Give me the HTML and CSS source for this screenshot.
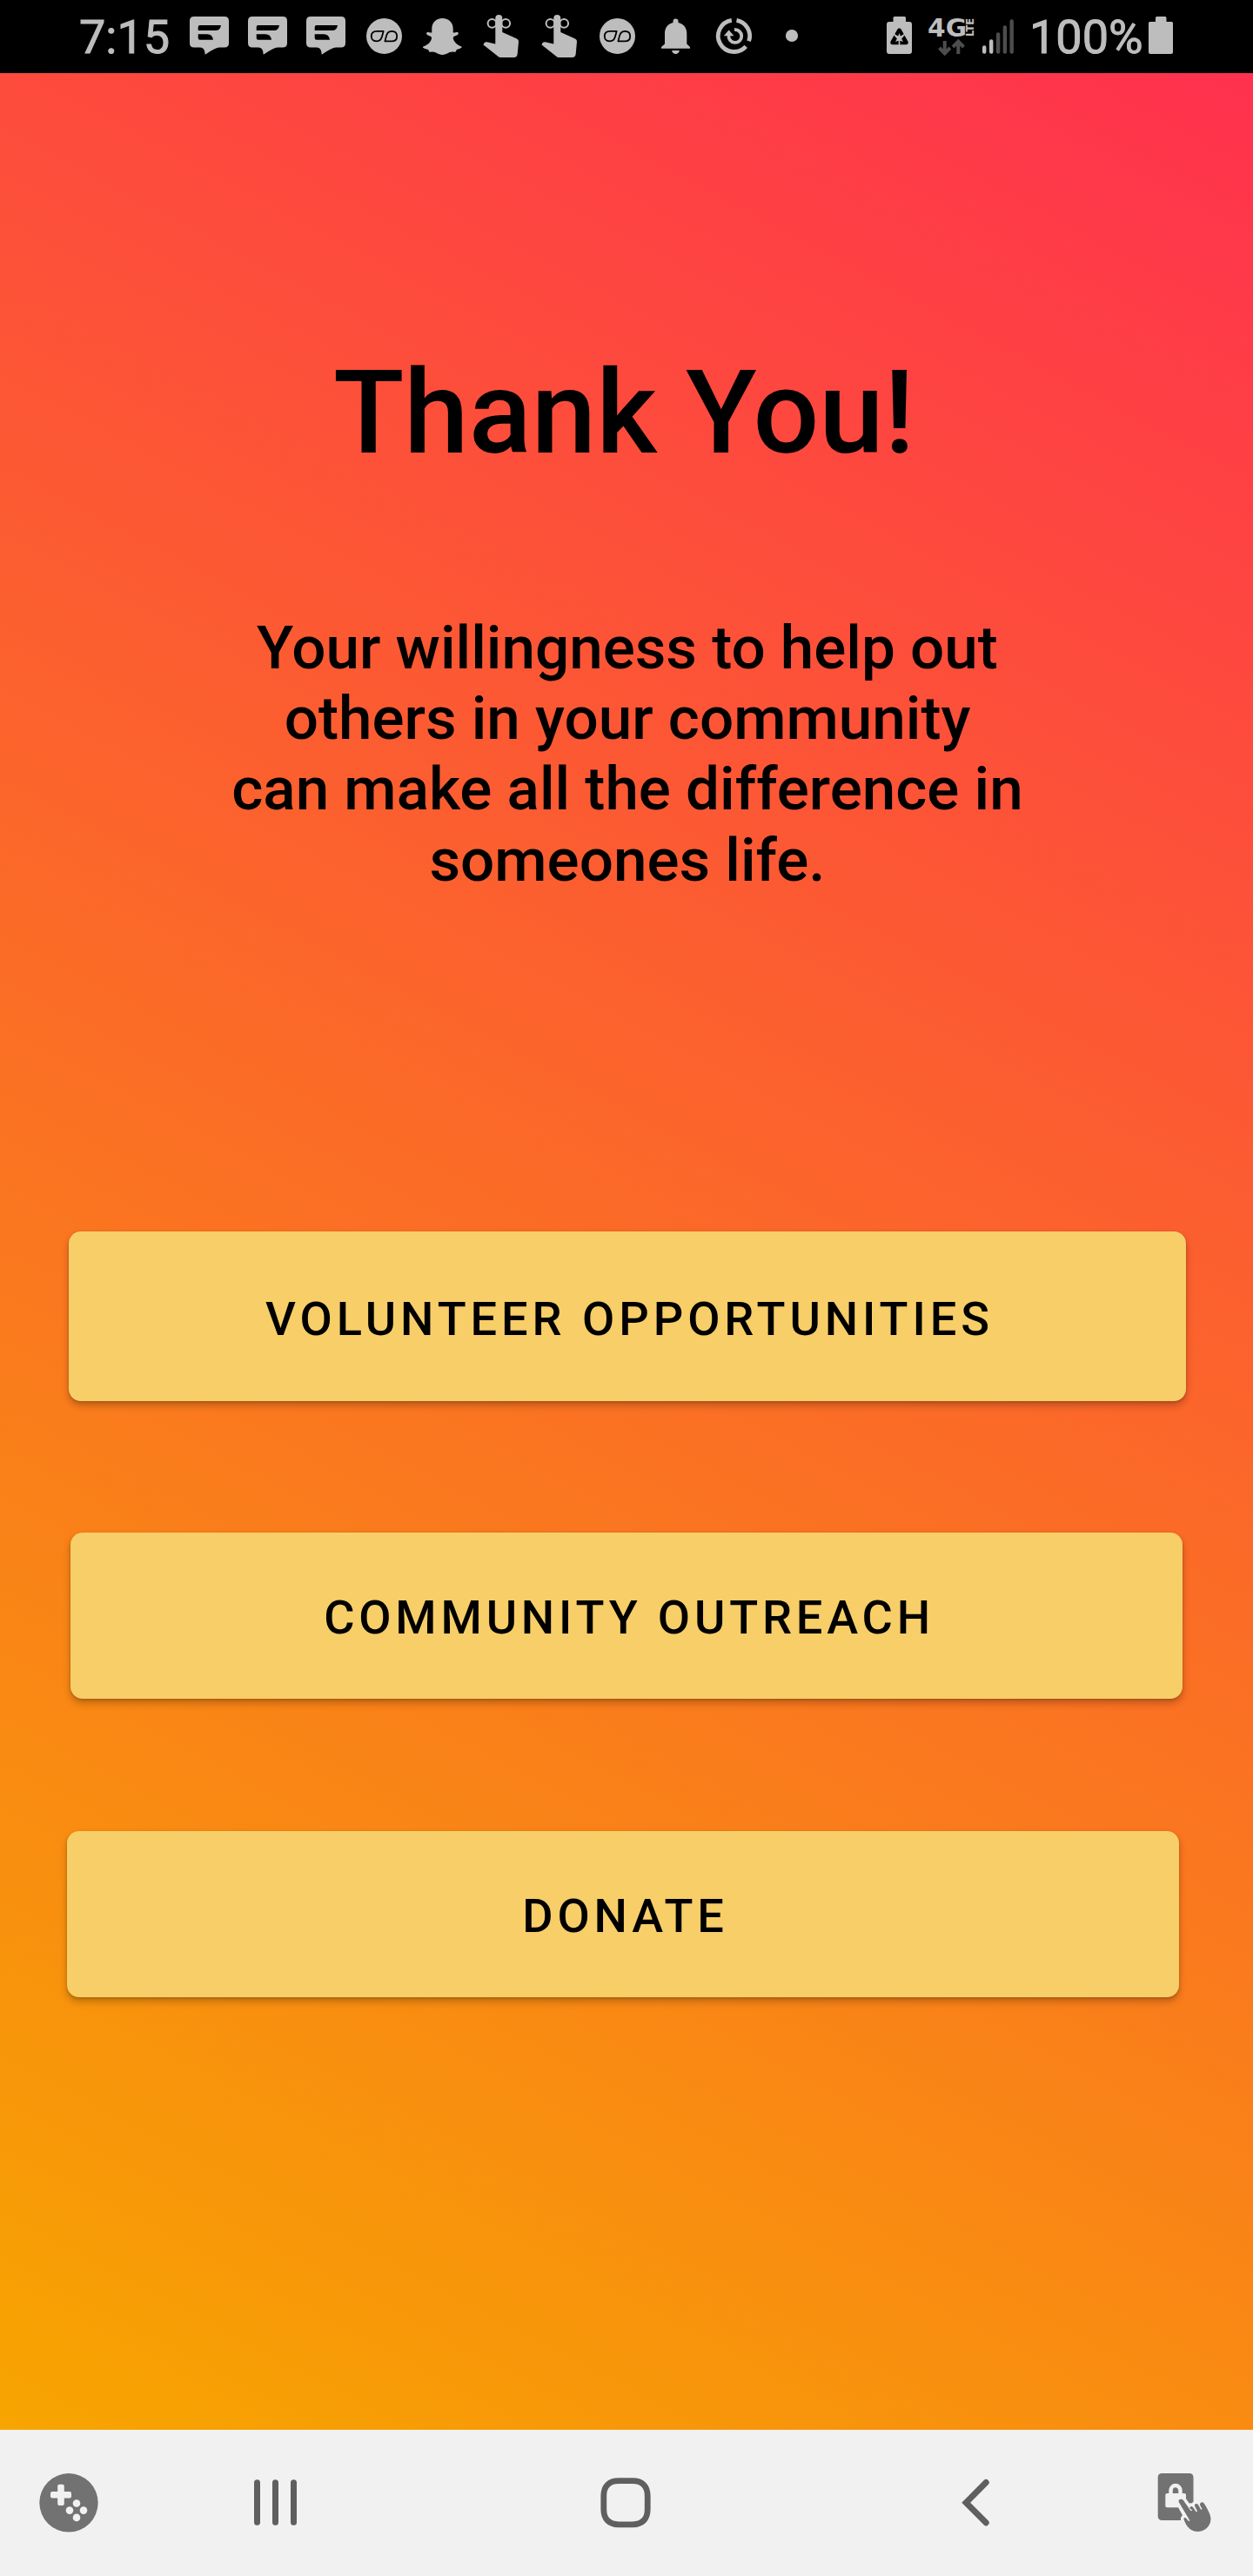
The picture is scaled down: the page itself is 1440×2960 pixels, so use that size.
FILE: index.html
```html
<!DOCTYPE html>
<html lang="en">
<head>
<meta charset="utf-8">
<title>Thank You!</title>
<link rel="stylesheet" href="styles.css">
</head>
<body>
<svg class="defs" aria-hidden="true">
  <symbol id="message" viewBox="207 0 67 84">
    <path fill="currentColor" d="M223 19H258Q263 19 263 24V49.500Q263 54.500 258 54.500H252Q248 54.500 235.700 62.700Q235.500 54.500 230 54.500H223Q218 54.500 218 49.500V24Q218 19 223 19Z"/>
    <path fill="#000" d="M229.700 29H254Q253 35 248 35H227.700V31Q227.700 29 229.700 29ZM227.700 39.300H238Q244 39.300 245 45.700H229.700Q227.700 45.700 227.700 43.700Z"/>
  </symbol>
  <symbol id="mask" viewBox="408 0 67 84">
    <circle cx="441.500" cy="41.400" r="20.500" fill="currentColor"/>
    <path fill="none" stroke="#000" stroke-width="1.800" stroke-linejoin="round" d="M440.700 35.800H433Q426.800 35.800 426.800 41.500T432.500 47.400C439 47.400 438.800 42 440.700 35.800ZM442.400 47.400H450Q456.200 47.400 456.200 41.700T450.500 35.800C444 35.800 444.200 41 442.400 47.400Z"/>
  </symbol>
  <symbol id="reminder" viewBox="542 0 67 84">
    <circle cx="565.500" cy="26.800" r="4.900" fill="none" stroke="currentColor" stroke-width="2"/>
    <circle cx="581.200" cy="26.800" r="4.900" fill="none" stroke="currentColor" stroke-width="2"/>
    <path fill="currentColor" d="M569.300 21A4 4 0 0 1 577.300 21V37L594 44.500Q596.300 45.500 596 48L594.700 62Q594.300 66 590.500 66H575.500Q573.500 66 572 64.500L555.500 51.500Q556.500 48 559.500 48.300L569.300 50.500Z"/>
  </symbol>
</svg>

<header class="status">
  <span class="clock">7:15</span>
  <svg class="tray"><use href="#message"/></svg>
  <svg class="tray"><use href="#message"/></svg>
  <svg class="tray"><use href="#message"/></svg>
  <svg class="tray"><use href="#mask"/></svg>
  <svg class="tray" viewBox="475 0 67 84"><path fill="currentColor" d="M508.400 21C516 21 520.700 26 520.700 33V37.500C523 38 524.500 36.500 526 37C527.500 38 527 39.500 525 40.500C522.500 41.700 520.500 42 520.800 44C521.500 48 525.500 52 530 53.300Q531.500 54.300 529.500 55.300C527.500 56.500 525.500 56.500 524.500 57.500C524 59.500 523.500 60 521.500 59.700C515.500 59 514.500 63 508.400 63S501.500 59 495.300 59.700C493.300 60 493 59.500 492.500 57.500C491.500 56.500 489 56.500 487 55.300Q485 54.300 486.700 53.300C491.500 52 495.500 48 496 44C496.300 42 494.300 41.700 491.800 40.500C489.800 39.500 489.500 38 491 37C492.500 36.500 494 38 496.300 37.500V33C496.300 26 501 21 508.400 21Z"/></svg>
  <svg class="tray"><use href="#reminder"/></svg>
  <svg class="tray"><use href="#reminder"/></svg>
  <svg class="tray"><use href="#mask"/></svg>
  <svg class="tray" viewBox="743 0 67 84"><path fill="currentColor" d="M773.500 24.500A3 3 0 0 1 779.500 24.500V26C786 27.500 789.300 32.500 789.300 38.500V50.500L793 54V55.700H760V54L764 50.500V38.500C764 32.500 767 27.500 773.500 26ZM772.200 58H780.800A4.300 4 0 0 1 772.200 58Z"/></svg>
  <svg class="tray" viewBox="810 0 67 84">
    <path fill="none" stroke="currentColor" stroke-width="4.800" d="M846.500 23.400A18.200 18.200 0 0 1 860.600 47.300M857.200 53.300A18.200 18.200 0 1 1 840.800 23.300"/>
    <path fill="none" stroke="currentColor" stroke-width="3.800" d="M844 34.200A7.400 7.400 0 1 1 837.500 40.500"/>
    <path fill="currentColor" d="M837.600 34.500L843.500 41.300H831.800Z"/>
  </svg>
  <svg class="tray" viewBox="877 0 67 84"><circle cx="910" cy="41" r="7.100" fill="currentColor"/></svg>

  <div class="system">
    <svg width="52" height="84" viewBox="1010 0 52 84">
      <path fill="currentColor" d="M1028 19H1039.500Q1041 19 1041 20.500V25H1045Q1048 25 1048 28V59Q1048 62 1045 62H1022Q1019 62 1019 59V28Q1019 25 1022 25H1026.500V20.500Q1026.500 19 1028 19Z"/>
      <path fill="none" stroke="#000" stroke-width="5" stroke-linejoin="round" d="M1033.500 35L1041.200 48.700H1025.800Z"/>
      <path stroke="currentColor" stroke-width="1.700" d="M1033.500 43.500V53M1033.500 43.500L1026 38.800M1033.500 43.500L1041 38.800"/>
      <path fill="currentColor" d="M1033.500 38L1035 42L1039 41.500L1036 44.500L1038 48L1033.500 46.500L1029 48L1031 44.500L1028 41.500L1032 42Z"/>
    </svg>
    <svg class="network" width="64" height="84" viewBox="1062 0 64 84">
      <text class="network-type" x="1066" y="42" textLength="45" lengthAdjust="spacingAndGlyphs">4G</text>
      <text class="network-lte" transform="translate(1119 42) rotate(-90)" x="0" y="0" textLength="21" lengthAdjust="spacingAndGlyphs">LTE</text>
      <path fill="none" stroke="#4d4d4d" stroke-width="4" d="M1085.700 47V62M1079.500 55L1085.700 61.300L1091.900 55M1101.300 62V48M1095.100 54L1101.300 47.700L1107.500 54"/>
    </svg>
    <svg width="57" height="84" viewBox="1126 0 57 84">
      <g stroke-width="4.400" stroke-linecap="round">
        <path stroke="currentColor" d="M1131.200 54.500V59.500M1139.200 47.500V59.500"/>
        <path stroke="#4d4d4d" d="M1147.100 39.500V59.500M1154.900 31.500V59.500M1162.700 24.500V59.500"/>
      </g>
    </svg>
    <span class="percent">100%</span>
    <svg width="38" height="84" viewBox="1315 0 38 84"><path fill="currentColor" d="M1329.500 19H1339Q1340.500 19 1340.500 20.500V25H1346.500Q1348 25 1348 26.500V60Q1348 62 1346 62H1322Q1320 62 1320 60V26.500Q1320 25 1321.500 25H1328V20.500Q1328 19 1329.500 19Z"/></svg>
  </div>
</header>

<main class="screen">
  <h1 class="title">Thank You!</h1>
  <p class="message">Your willingness to help out<br>others in your community<br>can make all the difference in<br>someones life.</p>
  <button class="action action-volunteer">Volunteer Opportunities</button>
  <button class="action action-outreach">Community Outreach</button>
  <button class="action action-donate">Donate</button>
</main>

<nav class="navbar">
  <svg class="game" width="68" height="68" viewBox="45 2842 68 68">
    <circle cx="79" cy="2875.800" r="33.700" fill="#727272"/>
    <g fill="#f1f1f1">
      <rect x="66.200" y="2854.700" width="7.600" height="24.300" rx="2"/><rect x="58" y="2862.900" width="24" height="7.600" rx="2"/>
      <circle cx="88" cy="2876.500" r="4.300"/><circle cx="80" cy="2884.600" r="4.300"/><circle cx="96" cy="2884.600" r="4.300"/><circle cx="88" cy="2892.900" r="4.300"/>
    </g>
  </svg>
  <svg class="recents" width="49" height="60" viewBox="292 2846 49 60"><path fill="none" stroke="#5f5f5f" stroke-width="7" stroke-linecap="round" d="M295.500 2852.700V2898.300M316.500 2852.700V2898.300M337.500 2852.700V2898.300"/></svg>
  <svg class="home" width="58" height="60" viewBox="689.500 2846 58 60"><path fill="none" stroke="#5f5f5f" stroke-width="6.800" d="M710.500 2850.600H726.500C737.500 2850.600 743.700 2856.800 743.700 2867.800V2883.600C743.700 2894.600 737.500 2900.800 726.500 2900.800H710.500C699.500 2900.800 693.300 2894.600 693.300 2883.600V2867.800C693.300 2856.800 699.500 2850.600 710.500 2850.600Z"/></svg>
  <svg class="back" width="32" height="60" viewBox="1104.500 2846 32 60"><path fill="none" stroke="#5f5f5f" stroke-width="7" stroke-linecap="round" d="M1132.700 2852.500L1109.700 2875.700L1132.700 2898.700"/></svg>
  <svg class="lock" width="64" height="70" viewBox="20 16 64 70">
    <rect x="20.700" y="17" width="40.800" height="54" rx="4.500" fill="#727272"/>
    <path fill="none" stroke="#f1f1f1" stroke-width="4.500" d="M35.500 42V37A5.500 6 0 0 1 46.500 37V42"/>
    <rect x="29.300" y="40" width="23.700" height="16.300" rx="2" fill="#f1f1f1"/>
    <path fill="#727272" stroke="#f1f1f1" stroke-width="7" stroke-linejoin="round" d="M45 50.500C43 46.500 48 45.500 50 48L58.500 60.200L57 56.500C57.500 54 60 54.500 61.500 56.500L64 59.500L62.500 54.500C63 51.500 66 51.500 67.500 54L70 57L69 52.500C69.500 49.500 72.500 49.500 74 52C79 60 81.500 65 81.500 70A15 15 0 0 1 59 82C54 78.500 52.500 75 50.500 70C50 67.500 52.500 67.500 53.500 69L57 72.500Z"/>
    <path fill="#727272" d="M45 50.500C43 46.500 48 45.500 50 48L58.500 60.200L60.500 59.500L57.500 57.500C57 54.500 60 54 61.500 56.500L64.700 61.500L66 60.500L63 54.500C62.500 51.500 66 51 67.500 54L70.300 59L71.500 58L69 53.500C69 49.500 72.500 49.500 74 52C79 60 81.500 65 81.500 70A15 15 0 0 1 59 82C54 78.500 52.500 75 50.500 70C50 67.500 52.500 67.500 53.500 69L56 72L57.500 71.500Z"/>
  </svg>
</nav>
</body>
</html>
```
FILE: styles.css
```css
* { box-sizing: border-box; }

body {
  margin: 0;
  width: 1440px;
  height: 2960px;
  display: flex;
  flex-direction: column;
  overflow: hidden;
  font-family: Roboto, "Liberation Sans", sans-serif;
  background: #000;
}

svg { display: block; flex: none; }
.defs { width: 0; height: 0; }

/* Status bar */
.status {
  flex: none;
  height: 84px;
  display: flex;
  align-items: center;
  color: #bdbdbd;
  background: #000;
}
.clock, .percent {
  height: 84px;
  font-size: 54px;
  font-weight: 400;
  line-height: 84px;
  padding-top: 1px;
  -webkit-text-stroke: 1px #bdbdbd;
}
.clock { width: 207px; padding-left: 91px; }
.tray { width: 67px; height: 84px; }
.system { display: flex; margin-left: 66px; }
.percent { width: 132px; }
.network text { font-family: "DejaVu Sans", sans-serif; font-weight: 700; fill: #bdbdbd; }
.network-type { font-size: 29px; }
.network-lte { font-size: 12px; }

/* Content */
.screen {
  flex: none;
  height: 2708px;
  display: flex;
  flex-direction: column;
  align-items: flex-start;
  background: linear-gradient(28deg, #f7a500, #ff314e);
  color: #000;
}
.title {
  align-self: center;
  margin: 312px 6px 0 0;
  font-size: 133.7px;
  font-weight: 500;
  line-height: 157px;
}
.message {
  align-self: center;
  margin: 151px 0 0 2px;
  font-size: 69.2px;
  font-weight: 500;
  line-height: 81.2px;
  text-align: center;
}
.action {
  flex: none;
  width: 1278px;
  height: 191px;
  border: 0;
  border-radius: 14px;
  padding: 5px 0 0 5px;
  background: #f7ce68;
  color: #000;
  font: 500 54.1px Roboto, "Liberation Sans", sans-serif;
  letter-spacing: 4.83px;
  text-transform: uppercase;
  box-shadow: 0 5px 9px rgba(0, 0, 0, .24), 0 1px 3px rgba(0, 0, 0, .18);
}
.action-volunteer {
  width: 1284px;
  height: 195px;
  margin: 386px 0 0 79px;
  padding-top: 6px;
  letter-spacing: 4.95px;
}
.action-outreach { margin: 151px 0 0 81px; padding-left: 6px; }
.action-donate { margin: 152px 0 0 77px; }

/* Navigation bar */
.navbar {
  flex: none;
  height: 168px;
  display: flex;
  align-items: center;
  padding-left: 45px;
  background: #f1f1f1;
}
.recents { margin-left: 179px; }
.home { margin-left: 348.500px; }
.back { margin-left: 357px; }
.lock { margin-left: 193.500px; }
```
